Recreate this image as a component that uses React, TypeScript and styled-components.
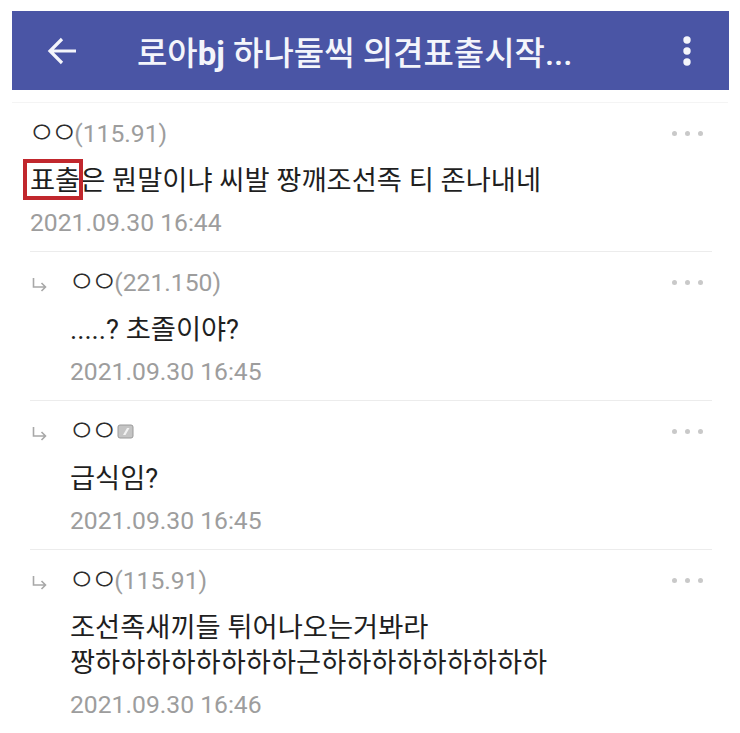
import type { ReactNode } from 'react'
import styled, { createGlobalStyle } from 'styled-components'

const Global = createGlobalStyle`
  html, body { margin: 0; padding: 0; background: #fff; }
  body { font-family: Roboto, "Noto Sans CJK KR", "Liberation Sans", sans-serif; }
`

const Page = styled.div`
  width: 740px;
  height: 733px;
  overflow: hidden;
  padding: 11px 12px 0;
  box-sizing: border-box;
`

const TopBar = styled.header`
  height: 79px;
  background: #4a55a5;
  display: flex;
  align-items: center;
  color: #f4f5fb;
  padding: 0 37px 0 35px;
  margin-right: -1px;
`

const Title = styled.h1`
  flex: 1;
  margin: 0 0 0 60px;
  font-size: 33px;
  font-weight: 500;
  white-space: nowrap;
  b {
    font-weight: 700;
  }
`

const List = styled.div`
  margin-top: 12px;
  border-top: 1px solid #f4f4f4;
  padding: 0 16px 0 18px;
`

const Row = styled.div`
  display: flex;
  border-bottom: 1px solid #ececec;
`

const ArrowCell = styled.div`
  width: 38px;
  flex: none;
  padding: 25px 0 0 2px;
  color: #a8a8a8;
`

const Body = styled.div`
  flex: 1;
  min-width: 0;
`

const Head = styled.div`
  display: flex;
  align-items: center;
  height: 34px;
  margin-top: 13px;
  color: #9d9d9d;
  font-size: 24.7px;
`

const Nick = styled.span`
  color: #2c2c2c;
  font-size: 30px;
  font-weight: 300;
  line-height: 34px;
  letter-spacing: -5px;
  margin: 0 1px 0 -2px;
`

const Ip = styled.span`
  flex: 1;
`

const More = styled.span`
  display: flex;
  gap: 8px;
  margin-right: 9px;
  span {
    width: 5px;
    height: 5px;
    border-radius: 50%;
    background: #c9c9c9;
  }
`

const Text = styled.div`
  margin-top: 14px;
  font-size: 27.3px;
  line-height: 35px;
  color: #1f1f1f;
`

const Mark = styled.span`
  display: inline-block;
  position: relative;
  &::after {
    content: '';
    position: absolute;
    inset: -5px -3px -1px -7px;
    border: 4px solid #c1272d;
  }
`

const Stamp = styled.div`
  margin: 7px 0 11px;
  font-size: 24.7px;
  line-height: 34px;
  color: #9d9d9d;
`

const Badge = styled.svg`
  margin-left: 3px;
`

function Dots() {
  return (
    <More>
      <span />
      <span />
      <span />
    </More>
  )
}

function ReplyArrow() {
  return (
    <svg width="15" height="15" viewBox="0 0 15 15" fill="none" stroke="currentColor" strokeWidth="1.6">
      <path d="M1.5 1v9h12M9.5 6l4 4-4 4" />
    </svg>
  )
}

function Comment({ nick, ip, reply, badge, stamp, children }: {
  nick: string
  ip?: string
  reply?: boolean
  badge?: boolean
  stamp: string
  children: ReactNode
}) {
  return (
    <Row>
      {reply && (
        <ArrowCell>
          <ReplyArrow />
        </ArrowCell>
      )}
      <Body>
        <Head>
          <Nick>{nick}</Nick>
          {badge && (
            <Badge width="17" height="15" viewBox="0 0 17 15">
              <rect x="1" y="1" width="15" height="13" rx="2" fill="#c4c4c4" stroke="#9a9a9a" />
              <path d="M6 11l4-7h2.5l-4 7z" fill="#f2f2f2" />
            </Badge>
          )}
          <Ip>{ip}</Ip>
          <Dots />
        </Head>
        <Text>{children}</Text>
        <Stamp>{stamp}</Stamp>
      </Body>
    </Row>
  )
}

export default function App() {
  return (
    <Page>
      <Global />
      <TopBar>
        <svg width="30" height="30" viewBox="0 0 30 30" fill="none" stroke="currentColor" strokeWidth="3.2">
          <path d="M29 15H3M15 3L3 15l12 12" />
        </svg>
        <Title>로아<b>bj</b> 하나둘씩 의견표출시작...</Title>
        <svg width="10" height="30" viewBox="0 0 10 30" fill="currentColor">
          <circle cx="5" cy="4" r="3.7" />
          <circle cx="5" cy="15" r="3.7" />
          <circle cx="5" cy="26" r="3.7" />
        </svg>
      </TopBar>
      <List>
        <Comment nick="ㅇㅇ" ip="(115.91)" stamp="2021.09.30 16:44">
          <Mark>표출</Mark>은 뭔말이냐 씨발 짱깨조선족 티 존나내네
        </Comment>
        <Comment reply nick="ㅇㅇ" ip="(221.150)" stamp="2021.09.30 16:45">
          .....? 초졸이야?
        </Comment>
        <Comment reply badge nick="ㅇㅇ" stamp="2021.09.30 16:45">
          급식임?
        </Comment>
        <Comment reply nick="ㅇㅇ" ip="(115.91)" stamp="2021.09.30 16:46">
          조선족새끼들 튀어나오는거봐라
          <br />
          짱하하하하하하하하근하하하하하하하하하
        </Comment>
      </List>
    </Page>
  )
}
